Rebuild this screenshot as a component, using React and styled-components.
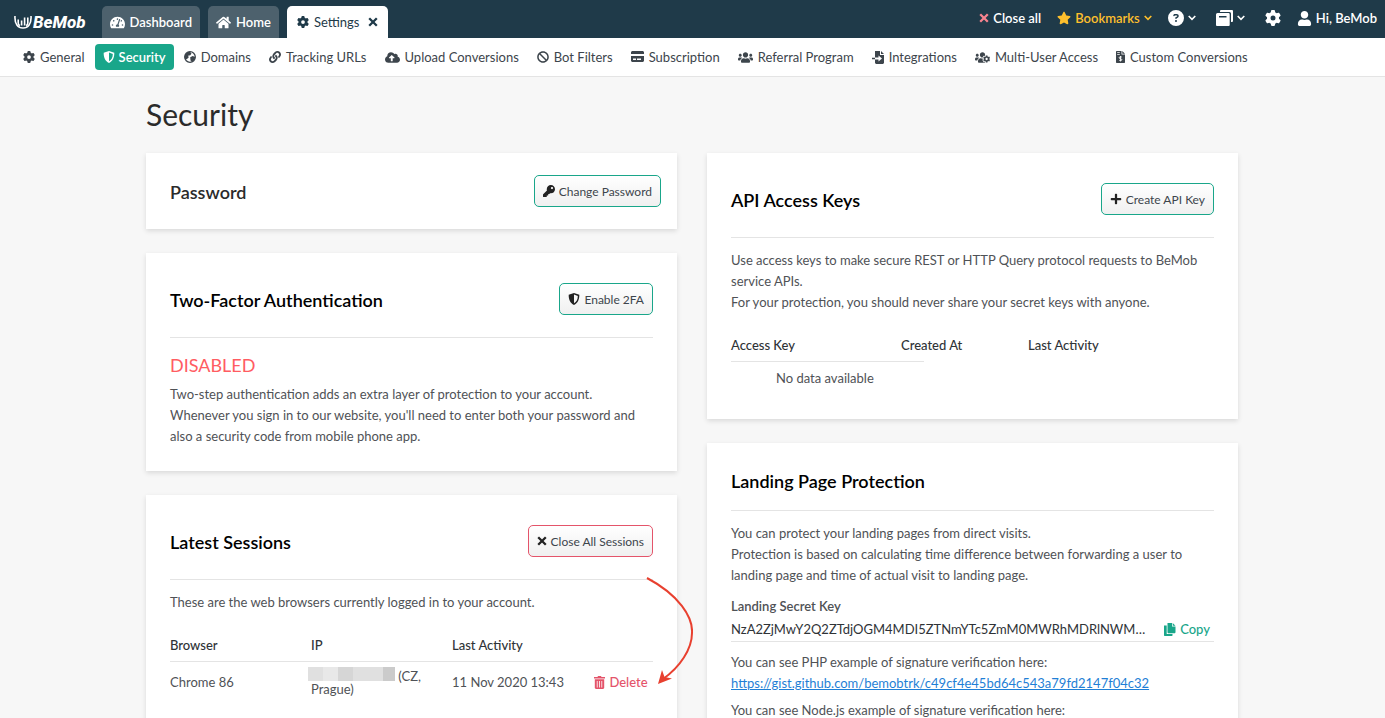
import styled, { createGlobalStyle, css } from 'styled-components';
import {
  FaTachometerAlt, FaHome, FaStar, FaUser, FaLink, FaCloudUploadAlt,
  FaUsers, FaUsersCog, FaKey, FaPlus, FaBan,
} from 'react-icons/fa';
import { FaCircleQuestion, FaGear } from 'react-icons/fa6';

const GlobalStyle = createGlobalStyle`
  * {
    box-sizing: border-box;
  }

  html {
    scrollbar-width: none;
  }

  body {
    margin: 0;
    background: #f7f7f7;
    color: #4f5256;
    font-family: Lato, "Liberation Sans", sans-serif;
    font-size: 13px;
    line-height: 21px;
  }

  button {
    font-family: inherit;
    cursor: pointer;
  }

  svg {
    display: block;
    flex-shrink: 0;
  }
`;

const TopBar = styled.header`
  display: flex;
  align-items: flex-end;
  justify-content: space-between;
  height: 38px;
  padding: 0 8px 0 14px;
  background: #1f3a49;
`;

const Tabs = styled.nav`
  display: flex;
  align-items: flex-end;
  gap: 8px;
`;

const Logo = styled.a`
  display: flex;
  align-items: center;
  gap: 1px;
  height: 32px;
  margin-right: 8px;
  color: #fff;
  font-family: Roboto, sans-serif;
  font-size: 17px;
  font-weight: 800;
  font-style: italic;
  text-decoration: none;
`;

const Tab = styled.a`
  display: flex;
  align-items: center;
  gap: 5px;
  height: 32px;
  padding: 0 8px;
  border-radius: 5px 5px 0 0;
  background: #4d616d;
  color: #fff;
  font-weight: 600;
  text-decoration: none;

  ${({ $active }) => $active && css`
    padding: 0 10px;
    background: #fff;
    color: #1f3a49;
    font-weight: 400;
  `}
`;

const TabClose = styled.button`
  margin-left: 4px;
  padding: 0;
  border: 0;
  background: none;
  color: inherit;
`;

const Actions = styled.div`
  display: flex;
  align-items: center;
  gap: 16px;
  height: 36px;
  align-self: flex-start;
`;

const Action = styled.button`
  display: flex;
  align-items: center;
  gap: 4px;
  padding: ${({ $spaced }) => ($spaced ? '0 4px' : '0')};
  border: 0;
  background: none;
  color: ${({ $color }) => $color || '#fff'};
  font-size: 13px;
  font-weight: 600;
`;

const SubNav = styled.nav`
  display: flex;
  align-items: center;
  gap: 2px;
  height: 39px;
  padding: 0 15px;
  border-bottom: 1px solid #e4e4e4;
  background: #fff;
`;

const SubLink = styled.a`
  display: flex;
  align-items: center;
  gap: 5px;
  height: 26px;
  padding: 0 8px;
  border-radius: 4px;
  color: #3d454c;
  text-decoration: none;
  white-space: nowrap;

  ${({ $active }) => $active && css`
    gap: 4px;
    background: #19a68a;
    color: #fff;
    font-weight: 600;
  `}
`;

const Page = styled.main`
  max-width: 1093px;
  margin: 0 auto;
  padding-right: 1px;
`;

const PageTitle = styled.h1`
  margin: 0;
  padding: 19px 0 21px;
  color: #2b2b2b;
  font-size: 30px;
  font-weight: 400;
  line-height: 36px;
`;

const Columns = styled.div`
  display: grid;
  grid-template-columns: 1fr 1fr;
  align-items: start;
  gap: 30px;
`;

const Column = styled.div`
  display: flex;
  flex-direction: column;
  gap: 24px;
`;

const Card = styled.section`
  position: relative;
  padding: ${({ $compact }) => ($compact ? '22px 16px 22px 24px' : '30px 24px 24px')};
  background: #fff;
  box-shadow: 0 2px 5px rgba(0, 0, 0, 0.12);
`;

const CardHead = styled.div`
  display: flex;
  align-items: center;
  justify-content: space-between;

  ${({ $ruled }) => $ruled && css`
    margin-bottom: 12px;
    padding-bottom: 22px;
    border-bottom: 1px solid #e4e4e4;
  `}
`;

const CardTitle = styled.h2`
  margin: 0;
  padding-top: 1px;
  color: ${({ $soft }) => ($soft ? '#2b2b2b' : '#000')};
  font-size: 18px;
  font-weight: 600;
  line-height: 14px;
`;

const OutlineButton = styled.button`
  display: flex;
  align-items: center;
  gap: 4px;
  height: 32px;
  padding: 0 8px;
  border: 1px solid ${({ $danger }) => ($danger ? '#e4546a' : '#19a68a')};
  border-radius: 5px;
  background: linear-gradient(#fff, #f0f0f0);
  color: #3d454c;
  font-size: 12px;

  svg {
    color: #222;
  }
`;

const Text = styled.p`
  margin: 0;
`;

const Status = styled.p`
  margin: 0 0 4px;
  color: #ff5c62;
  font-size: 18px;
  line-height: 30px;
`;

const Table = styled.table`
  width: 100%;
  margin-top: 22px;
  border-collapse: collapse;
  table-layout: fixed;
`;

const Th = styled.th`
  width: ${({ $width }) => $width || 'auto'};
  height: 26px;
  padding: 0;
  border-bottom: ${({ $ruled }) => ($ruled ? '1px solid #e4e4e4' : '0')};
  color: #2f3337;
  font-weight: 500;
  text-align: left;
  vertical-align: top;
`;

const Td = styled.td`
  height: 42px;
  padding: 0;
  line-height: 13px;
  text-align: ${({ $align }) => $align || 'left'};
`;

const NoData = styled.div`
  width: 193px;
  padding: 6px 0 6px 45px;
  border-top: 1px solid #e4e4e4;
`;

const Redacted = styled.svg`
  display: inline-block;
  margin: -2px 0 0 -3px;
  vertical-align: baseline;
`;

const TextButton = styled.button`
  display: inline-flex;
  align-items: center;
  gap: 4px;
  padding: 0;
  border: 0;
  background: none;
  color: ${({ $danger }) => ($danger ? '#e4546a' : '#19a68a')};
  font-size: 13px;
  font-weight: 500;
  line-height: 21px;
`;

const Arrow = styled.svg`
  position: absolute;
  top: 80px;
  right: -16px;
`;

const KeyLabel = styled.label`
  display: block;
  margin-top: 10px;
  font-weight: 600;
`;

const KeyRow = styled.div`
  display: flex;
  align-items: center;
  gap: 18px;
  margin-bottom: 10px;
  padding-right: 4px;
  border-bottom: 1px solid #e4e4e4;
`;

const KeyInput = styled.input`
  flex: 1;
  min-width: 0;
  height: 24px;
  padding: 0;
  border: 0;
  background: none;
  color: #2f3337;
  font-family: inherit;
  font-size: 13px;
  text-overflow: ellipsis;
`;

const Link = styled.a`
  display: block;
  margin-bottom: 6px;
  color: #1f7fd6;
`;

const LogoMark = () => (
  <svg width="18" height="14" viewBox="0 0 18 14" fill="none" stroke="#fff" strokeWidth="1.6">
    <path d="M1 1C.4 9 4 13 9 13s8.600-4 8-12" />
    <path d="M4.200 4.500v3.500c0 1.300.8 2.200 1.800 2.600M7.600 5.500v5M10.600 2.500v8M13.800 2.500v5.500c0 1.300-.8 2.200-1.800 2.600" />
  </svg>
);

const Chevron = () => (
  <svg width="8" height="6" viewBox="0 0 8 6" fill="none" stroke="currentColor" strokeWidth="1.600">
    <path d="M.7 1 4 4.300 7.300 1" />
  </svg>
);

const Cross = ({ color = 'currentColor' }) => (
  <svg width="10" height="10" viewBox="0 0 10 10" fill="none" stroke={color} strokeWidth="2.300">
    <path d="M1.200 1.200 8.800 8.800M8.800 1.200 1.200 8.800" />
  </svg>
);

const Shield = () => (
  <svg width="12" height="12" viewBox="0 0 12 12" fill="currentColor">
    <path fillRule="evenodd" d="M6 0 11.300 1.800C11.500 6.500 9.700 10.200 6 12 2.300 10.200.5 6.500.7 1.800ZM6 1.600v8.700C8.500 8.800 9.800 6.300 9.800 2.900Z" />
  </svg>
);

const Globe = () => (
  <svg width="12" height="12" viewBox="0 0 12 12">
    <circle cx="6" cy="6" r="5.300" fill="#fff" stroke="currentColor" strokeWidth="1.300" />
    <path fill="currentColor" d="M6 .7C3 .7.700 3 .7 6c0 1 .3 1.800.7 2.500L3 8l1.800-1.700L4 4.800l2.300-.6L7.500 2.500ZM6.200 6.300 8.700 5l2.600 1-.7 2.800-2.400 2.300-1.700-1.700Z" />
  </svg>
);

const CardIcon = () => (
  <svg width="13" height="12" viewBox="0 0 13 12" fill="currentColor">
    <path fillRule="evenodd" d="M1 0h11l1 1v2H0V1ZM0 5h13v5l-1 1H1l-1-1ZM2 7.500V9h3V7.500ZM6 7.500V9h4V7.500Z" />
  </svg>
);

const ImportIcon = () => (
  <svg width="12" height="13" viewBox="0 0 12 13" fill="currentColor">
    <path fillRule="evenodd" d="M3 0h5v4h4v8l-1 1H4l-1-1V8.500h3.500V10.500L10 7.400 6.500 4.500v2H3ZM9 0l3 3H9ZM0 6.700h3v1.600H0Z" />
  </svg>
);

const InvoiceIcon = () => (
  <svg width="9" height="12" viewBox="0 0 9 12" fill="currentColor">
    <path fillRule="evenodd" d="M.6 0H5.500v3.500H9v7.900l-.6.600H.6L0 11.400V.6ZM6.300 0 9 2.700H6.300ZM1.200 1.300v.8h2.600v-.8ZM1.200 2.900v.8h2.600v-.8Z" />
    <path fill="none" stroke="#fff" strokeWidth=".9" d="M5.900 6.300Q5.500 5.800 4.500 5.800 3.200 5.800 3.200 6.700T4.500 7.700 5.800 8.700 4.500 9.600Q3.500 9.600 3.100 9.100M4.500 5v5.400" />
  </svg>
);

const Windows = () => (
  <svg width="17" height="16" viewBox="0 0 17 16" fill="#fff">
    <path d="M5 0h11q1 0 1 1v10q0 1-1 1h-1V3.500Q15 2 13.500 2H4V1q0-1 1-1Z" />
    <path fillRule="evenodd" d="M1.500 3h11q1.200 0 1.200 1.200V15q0 1-1 1H1q-1 0-1-1V4.500Q0 3 1.500 3ZM3 6v1.500h7.500V6Z" />
  </svg>
);

const TrashIcon = () => (
  <svg width="11" height="13" viewBox="0 0 11 13" fill="currentColor">
    <path d="M0 1h3.500l.5-1h3l.5 1H11v1.500H0Z" />
    <path fillRule="evenodd" d="M.8 3.200h9.400V12l-1 1H1.800l-1-1ZM2.800 5v6.500h.8V5ZM5.100 5v6.500h.8V5ZM7.400 5v6.500h.8V5Z" />
  </svg>
);

const CopyIcon = () => (
  <svg width="12" height="13" viewBox="0 0 12 13" fill="currentColor">
    <path d="M3.500 0H8v3.500h3.500V9.500l-.7.800H4.200L3.500 9.500ZM8.700 0l2.800 2.800H8.700Z" />
    <path d="M0 2.500h2.700V11H8.500v1.500l-.5.500H.5L0 12.500Z" />
  </svg>
);

const subLinks = [
  { label: 'General', icon: <FaGear size={12} /> },
  { label: 'Security', icon: <Shield />, active: true },
  { label: 'Domains', icon: <Globe /> },
  { label: 'Tracking URLs', icon: <FaLink size={12} /> },
  { label: 'Upload Conversions', icon: <FaCloudUploadAlt size={15} /> },
  { label: 'Bot Filters', icon: <FaBan size={12} /> },
  { label: 'Subscription', icon: <CardIcon /> },
  { label: 'Referral Program', icon: <FaUsers size={15} /> },
  { label: 'Integrations', icon: <ImportIcon /> },
  { label: 'Multi-User Access', icon: <FaUsersCog size={15} /> },
  { label: 'Custom Conversions', icon: <InvoiceIcon /> },
];

export default function App() {
  return (
    <>
      <GlobalStyle />
      <TopBar>
        <Tabs>
          <Logo href="#"><LogoMark />BeMob</Logo>
          <Tab href="#"><FaTachometerAlt size={15} />Dashboard</Tab>
          <Tab href="#"><FaHome size={15} />Home</Tab>
          <Tab as="div" $active>
            <FaGear size={12} />Settings
            <TabClose aria-label="Close tab"><Cross /></TabClose>
          </Tab>
        </Tabs>
        <Actions>
          <Action><Cross color="#f7838f" />Close all</Action>
          <Action $color="#fdbf2d"><FaStar size={14} />Bookmarks<Chevron /></Action>
          <Action aria-label="Help"><FaCircleQuestion size={16} /><Chevron /></Action>
          <Action aria-label="Windows" $spaced><Windows /><Chevron /></Action>
          <Action aria-label="Settings"><FaGear size={16} /></Action>
          <Action><FaUser size={15} />Hi, BeMob</Action>
        </Actions>
      </TopBar>
      <SubNav>
        {subLinks.map(({ label, icon, active }) => (
          <SubLink key={label} href="#" $active={active}>{icon}{label}</SubLink>
        ))}
      </SubNav>

      <Page>
        <PageTitle>Security</PageTitle>
        <Columns>
          <Column>
            <Card $compact>
              <CardHead>
                <CardTitle $soft>Password</CardTitle>
                <OutlineButton><FaKey size={12} />Change Password</OutlineButton>
              </CardHead>
            </Card>

            <Card>
              <CardHead $ruled>
                <CardTitle>Two-Factor Authentication</CardTitle>
                <OutlineButton><Shield />Enable 2FA</OutlineButton>
              </CardHead>
              <Status>DISABLED</Status>
              <Text>
                Two-step authentication adds an extra layer of protection to your account.
                <br />
                Whenever you sign in to our website, you'll need to enter both your password and
                also a security code from mobile phone app.
              </Text>
            </Card>

            <Card>
              <CardHead $ruled>
                <CardTitle>Latest Sessions</CardTitle>
                <OutlineButton $danger><Cross />Close All Sessions</OutlineButton>
              </CardHead>
              <Text>These are the web browsers currently logged in to your account.</Text>
              <Table>
                <thead>
                  <tr>
                    <Th $ruled $width="141px">Browser</Th>
                    <Th $ruled $width="141px">IP</Th>
                    <Th $ruled>Last Activity</Th>
                    <Th $ruled $width="64px" aria-label="Actions" />
                  </tr>
                </thead>
                <tbody>
                  <tr>
                    <Td>Chrome 86</Td>
                    <Td>
                      <Redacted width="87" height="14" viewBox="0 0 87 14">
                        <rect width="15" height="14" fill="#e0e0e0" />
                        <rect x="15" width="15" height="14" fill="#e8e8e8" />
                        <rect x="30" width="15" height="14" fill="#d6d6d6" />
                        <rect x="45" width="30" height="14" fill="#e0e0e0" />
                        <rect x="75" width="12" height="14" fill="#cbcbcb" />
                      </Redacted>
                      {' '}(CZ,
                      <br />
                      Prague)
                    </Td>
                    <Td>11 Nov 2020 13:43</Td>
                    <Td $align="center"><TextButton $danger><TrashIcon />Delete</TextButton></Td>
                  </tr>
                </tbody>
              </Table>
              <Arrow width="52" height="112" viewBox="0 0 52 112">
                <path d="M6 3C38 20 52 42 51 58c0 16-12 34-29 46" fill="none" stroke="#e8402f" strokeWidth="2" />
                <path d="M17 109 21 95l2.500 7 7.500 1.500Z" fill="#e8402f" />
              </Arrow>
            </Card>
          </Column>

          <Column>
            <Card>
              <CardHead $ruled>
                <CardTitle>API Access Keys</CardTitle>
                <OutlineButton><FaPlus size={12} />Create API Key</OutlineButton>
              </CardHead>
              <Text>
                Use access keys to make secure REST or HTTP Query protocol requests to BeMob service
                APIs.
              </Text>
              <Text>For your protection, you should never share your secret keys with anyone.</Text>
              <Table>
                <thead>
                  <tr>
                    <Th $width="170px">Access Key</Th>
                    <Th $width="127px">Created At</Th>
                    <Th>Last Activity</Th>
                  </tr>
                </thead>
              </Table>
              <NoData>No data available</NoData>
            </Card>

            <Card>
              <CardHead $ruled>
                <CardTitle>Landing Page Protection</CardTitle>
              </CardHead>
              <Text>You can protect your landing pages from direct visits.</Text>
              <Text>
                Protection is based on calculating time difference between forwarding a user to
                landing page and time of actual visit to landing page.
              </Text>
              <KeyLabel htmlFor="secret-key">Landing Secret Key</KeyLabel>
              <KeyRow>
                <KeyInput id="secret-key" readOnly defaultValue="NzA2ZjMwY2Q2ZTdjOGM4MDI5ZTNmYTc5ZmM0MWRhMDRlNWM2ZjQ0YjE" />
                <TextButton><CopyIcon />Copy</TextButton>
              </KeyRow>
              <Text>You can see PHP example of signature verification here:</Text>
              <Link href="https://gist.github.com/bemobtrk/c49cf4e45bd64c543a79fd2147f04c32">
                https://gist.github.com/bemobtrk/c49cf4e45bd64c543a79fd2147f04c32
              </Link>
              <Text>You can see Node.js example of signature verification here:</Text>
            </Card>
          </Column>
        </Columns>
      </Page>
    </>
  );
}
